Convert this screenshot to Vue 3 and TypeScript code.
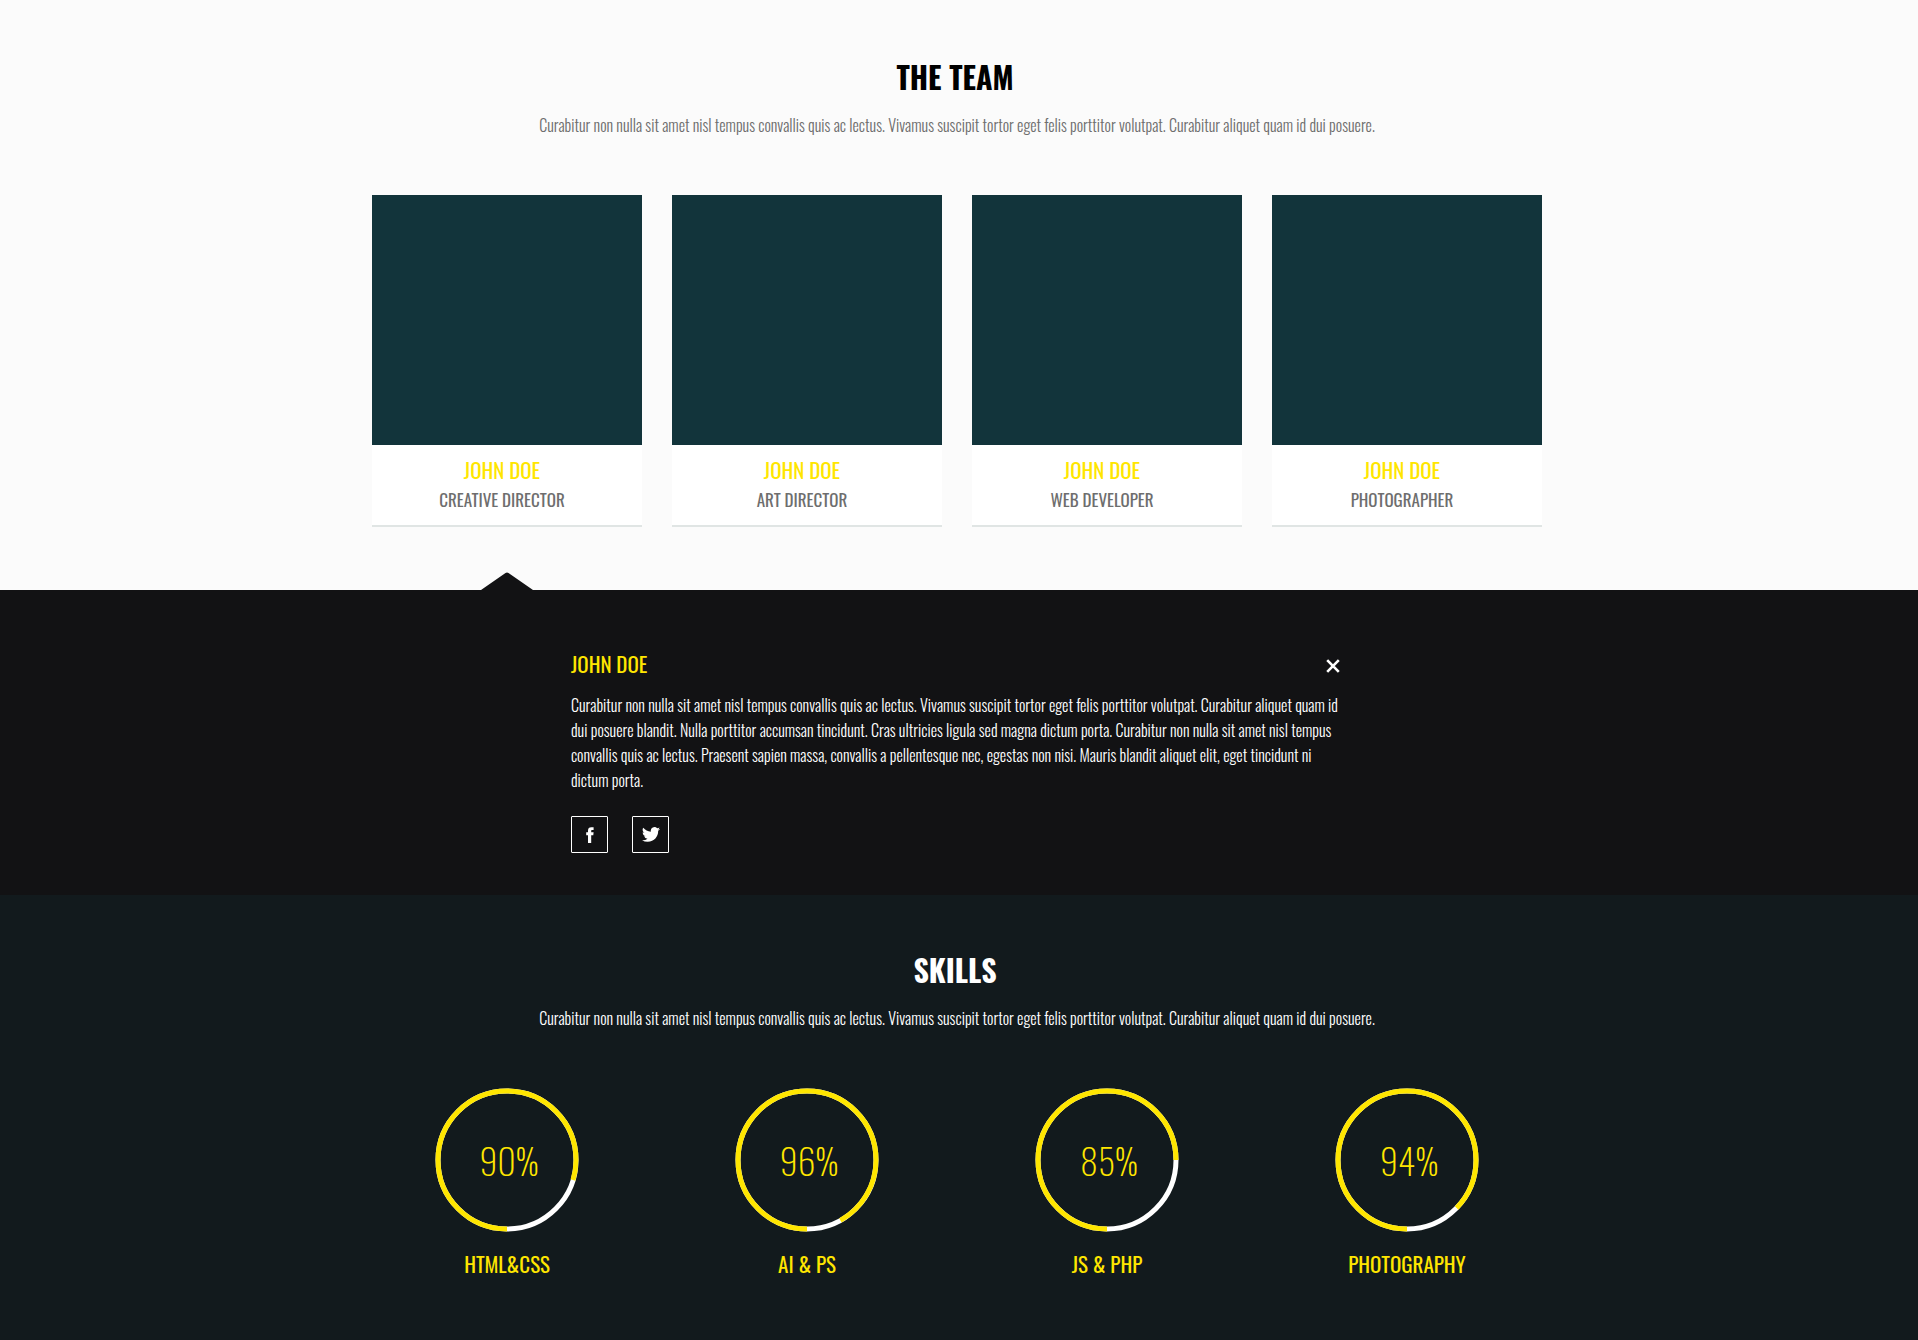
<script setup lang="ts">
import { ref } from 'vue'

interface Member {
  name: string
  role: string
}

interface Skill {
  name: string
  value: number
  // share of the ring left white, counted from the bottom, in degrees
  rest: number
}

const intro =
  'Curabitur non nulla sit amet nisl tempus convallis quis ac lectus. Vivamus suscipit tortor eget felis porttitor volutpat. Curabitur aliquet quam id dui posuere.'

const members: Member[] = [
  { name: 'JOHN DOE', role: 'CREATIVE DIRECTOR' },
  { name: 'JOHN DOE', role: 'ART DIRECTOR' },
  { name: 'JOHN DOE', role: 'WEB DEVELOPER' },
  { name: 'JOHN DOE', role: 'PHOTOGRAPHER' },
]

const skills: Skill[] = [
  { name: 'HTML&CSS', value: 90, rest: 73 },
  { name: 'AI & PS', value: 96, rest: 29 },
  { name: 'JS & PHP', value: 85, rest: 90 },
  { name: 'PHOTOGRAPHY', value: 94, rest: 46 },
]

const selected = ref<number | null>(0)
</script>

<template>
  <main class="page">
    <section class="team">
      <div class="container">
        <h2 class="title">THE TEAM</h2>
        <p class="intro">{{ intro }}</p>
        <ul class="grid">
          <li v-for="(member, i) in members" :key="member.role" class="card">
            <div class="photo"></div>
            <div class="caption">
              <h3 class="name">{{ member.name }}</h3>
              <p class="role">{{ member.role }}</p>
            </div>
            <svg v-if="selected === i" class="pointer" viewBox="0 0 52 18" aria-hidden="true">
              <path d="M0 18 24.500 1Q26-.2 27.500 1L52 18Z" fill="#121214" />
            </svg>
          </li>
        </ul>
      </div>
    </section>

    <section v-if="selected !== null" class="detail">
      <div class="container">
        <article class="bio">
          <header class="bio-head">
            <h3 class="name">{{ members[selected].name }}</h3>
            <button class="close" type="button" aria-label="Close" @click="selected = null">
              <svg viewBox="0 0 14 14" width="14" height="14" aria-hidden="true">
                <path d="M1.200 1.200 12.800 12.800M12.800 1.200 1.200 12.800" stroke="#fff" stroke-width="2.600" fill="none" />
              </svg>
            </button>
          </header>
          <p class="bio-text">
            Curabitur non nulla sit amet nisl tempus convallis quis ac lectus. Vivamus suscipit tortor eget felis porttitor volutpat. Curabitur aliquet quam id dui posuere blandit. Nulla porttitor accumsan tincidunt. Cras ultricies ligula sed magna dictum porta. Curabitur non nulla sit amet nisl tempus convallis quis ac lectus. Praesent sapien massa, convallis a pellentesque nec, egestas non nisi. Mauris blandit aliquet elit, eget tincidunt ni dictum porta.
          </p>
          <nav class="social">
            <a href="#" aria-label="Facebook">
              <svg viewBox="0 0 8 16" width="8" height="16" aria-hidden="true">
                <path fill="#fff" d="M5.200 16H2V8.200H.2V5.300H2V3.600C2 1.300 3.100.2 5.300.2H7.600V3H6.200C5.400 3 5.200 3.300 5.200 4V5.300H7.600L7.300 8.200H5.200Z" />
              </svg>
            </a>
            <a href="#" aria-label="Twitter">
              <svg viewBox="0 2 24 20" width="18" height="15" aria-hidden="true">
                <path fill="#fff" d="M24 4.560a9.830 9.830 0 0 1-2.830.770 4.930 4.930 0 0 0 2.170-2.720 9.860 9.860 0 0 1-3.130 1.190 4.920 4.920 0 0 0-8.380 4.480A13.980 13.980 0 0 1 1.670 3.150a4.920 4.920 0 0 0 1.520 6.570 4.900 4.900 0 0 1-2.230-.610 4.930 4.930 0 0 0 3.950 4.890 4.930 4.930 0 0 1-2.220.080 4.930 4.930 0 0 0 4.600 3.420A9.870 9.870 0 0 1 0 19.540a13.940 13.940 0 0 0 7.550 2.210c9.140 0 14.310-7.720 13.990-14.640A10.020 10.020 0 0 0 24 4.560z" />
              </svg>
            </a>
          </nav>
        </article>
      </div>
    </section>

    <section class="skills">
      <div class="container">
        <h2 class="title">SKILLS</h2>
        <p class="intro">{{ intro }}</p>
        <ul class="grid">
          <li v-for="skill in skills" :key="skill.name" class="skill">
            <div class="ring">
              <svg viewBox="0 0 144 144" aria-hidden="true">
                <circle cx="72" cy="72" r="69" fill="none" stroke="#fff" stroke-width="5" />
                <circle
                  cx="72"
                  cy="72"
                  r="69"
                  fill="none"
                  stroke="#ffe600"
                  stroke-width="5"
                  pathLength="360"
                  :stroke-dasharray="`${360 - skill.rest} ${skill.rest}`"
                  transform="rotate(90 72 72)"
                />
              </svg>
              <span class="value">{{ skill.value }}%</span>
            </div>
            <h3 class="name">{{ skill.name }}</h3>
          </li>
        </ul>
      </div>
    </section>
  </main>
</template>

<style>
body {
  margin: 0;
  background: #121a1d;
}
</style>

<style scoped>
.page {
  font-family: Oswald, "Roboto Condensed", "Liberation Sans", sans-serif;
  font-size: 16px;
  font-weight: 300;
  line-height: 25px;
}

h2,
h3,
p,
ul {
  margin: 0;
  padding: 0;
}

ul {
  list-style: none;
}

.team,
.detail,
.skills {
  padding-left: 16px;
  padding-right: 20px;
}

.container {
  max-width: 1170px;
  margin: 0 auto;
}

.title {
  padding-right: 4px;
  font-size: 30px;
  font-weight: 700;
  line-height: 50px;
  text-align: center;
}

.intro {
  margin-top: 11px;
  text-align: center;
}

.grid {
  display: grid;
  grid-template-columns: repeat(4, 1fr);
  gap: 30px;
  margin-top: 57px;
}

.name {
  color: #ffe600;
  font-size: 21px;
  font-weight: 400;
  line-height: 32px;
}

.team {
  padding-top: 52px;
  padding-bottom: 63px;
  background: #fbfbfb;
  color: #6e6e6e;
}

.team .title {
  color: #000;
}

.card {
  position: relative;
  text-align: center;
}

.photo {
  height: 250px;
  background: #12343b;
}

.caption {
  padding: 9px 10px 11px 0;
  border-bottom: 2px solid #e0e5e4;
  background: #fff;
}

.role {
  font-size: 17px;
  font-weight: 400;
  line-height: 28px;
}

.pointer {
  position: absolute;
  top: calc(100% + 45px);
  left: calc(50% - 26px);
  width: 52px;
  height: 18px;
}

.detail {
  padding-top: 58px;
  padding-bottom: 42px;
  background: #121214;
  color: #fff;
}

.bio {
  max-width: 772px;
  margin: 0 auto;
}

.bio-head {
  display: flex;
  align-items: center;
  justify-content: space-between;
}

.close {
  display: flex;
  padding: 5px 3px 1px;
  border: 0;
  background: none;
  cursor: pointer;
}

.bio-text {
  margin-top: 13px;
}

.social {
  display: flex;
  gap: 24px;
  margin-top: 23px;
}

.social a {
  display: flex;
  align-items: center;
  justify-content: center;
  box-sizing: border-box;
  width: 37px;
  height: 37px;
  border: 1px solid #fff;
  border-radius: 1px;
}

.skills {
  padding-top: 50px;
  padding-bottom: 60px;
  background: #121a1d;
  color: #fff;
}

.skill {
  display: flex;
  flex-direction: column;
  align-items: center;
  gap: 16px;
}

.ring {
  display: grid;
  width: 144px;
  height: 144px;
}

.ring > * {
  grid-area: 1 / 1;
}

.value {
  padding-left: 4px;
  color: #ffe600;
  font-size: 36px;
  font-weight: 200;
  line-height: 144px;
  text-align: center;
}
</style>
